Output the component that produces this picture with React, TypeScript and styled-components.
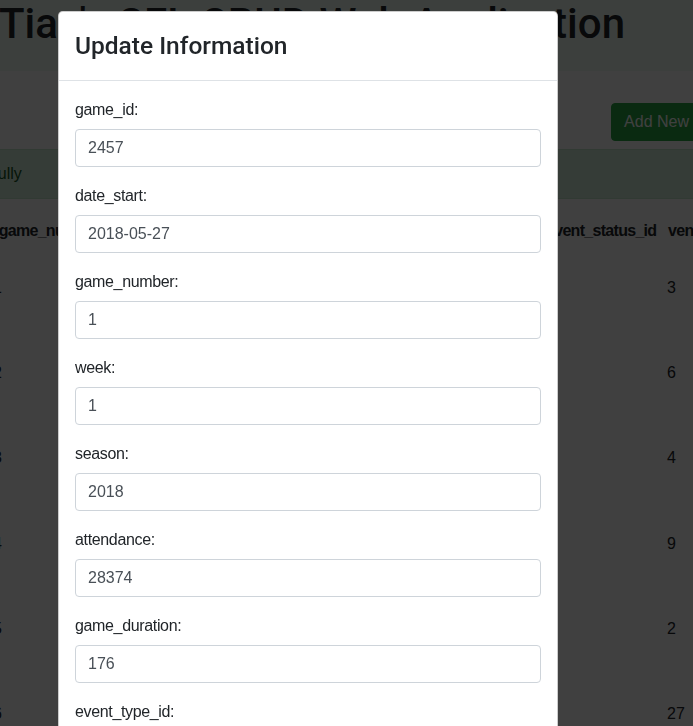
import React from 'react';
import styled, { createGlobalStyle } from 'styled-components';

const GlobalStyle = createGlobalStyle`
  * { box-sizing: border-box; }
  html, body {
    margin: 0;
    padding: 0;
    height: 100%;
    overflow: hidden;
    background: #fff;
  }
  body {
    font-family: "Liberation Sans", Arial, sans-serif;
    font-size: 16px;
    line-height: 1.5;
    color: #212529;
  }
`;

// the page behind the modal is wider than the window and scrolled sideways
const Page = styled.div`
  width: 930px;
  margin-left: -153px;
`;

const Banner = styled.header`
  background: #f0faf4;
  padding: 1px 0 23.8px;
  text-align: center;
`;

const Title = styled.h1`
  margin: 0;
  font-family: Roboto, "Liberation Sans", sans-serif;
  font-weight: 500;
  font-size: 42px;
  line-height: 1.1;
  color: #212529;
  white-space: nowrap;
`;

const Toolbar = styled.div`
  display: flex;
  justify-content: flex-end;
  padding: 32px 27px 8px 0;
`;

const Button = styled.button`
  height: 38px;
  padding: 6px 12px;
  font-family: inherit;
  font-size: 16px;
  line-height: 1.5;
  color: #fff;
  background: #28a745;
  border: 1px solid #28a745;
  border-radius: 4px;
  white-space: nowrap;
`;

const Alert = styled.div`
  padding: 12px 20px;
  background: #d4edda;
  border: 1px solid #c3e6cb;
  color: #155724;
`;

const Table = styled.table`
  table-layout: fixed;
  border-collapse: collapse;
  width: 890px;
`;

const HeadRow = styled.tr`
  height: 63px;
`;

const BodyRow = styled.tr`
  height: 85.2px;
`;

const Th = styled.th`
  padding: 0 6px 19px;
  text-align: center;
  vertical-align: bottom;
  font-weight: 700;
  letter-spacing: -0.7px;
  white-space: nowrap;
  overflow: hidden;
`;

const Td = styled.td`
  padding: 14px 6px 0 5px;
  vertical-align: top;
  white-space: nowrap;
  overflow: hidden;
`;

const Backdrop = styled.div`
  position: fixed;
  inset: 0;
  background: rgba(0, 0, 0, 0.75);
  z-index: 10;
`;

const Modal = styled.div`
  position: fixed;
  top: 11px;
  left: 58px;
  width: 500px;
  background: #fff;
  border: 1px solid rgba(0, 0, 0, 0.2);
  border-radius: 4.8px;
  z-index: 20;
`;

const ModalHeader = styled.div`
  padding: 16px;
  border-bottom: 1px solid #dee2e6;
`;

const ModalTitle = styled.h4`
  margin: 0;
  font-family: Roboto, "Liberation Sans", sans-serif;
  font-weight: 500;
  font-size: 24.5px;
  line-height: 36px;
  color: #212529;
`;

const ModalBody = styled.form`
  padding: 16px;
`;

const FormGroup = styled.div`
  margin-bottom: 16px;
`;

const Label = styled.label`
  display: inline-block;
  margin-bottom: 8px;
  padding-top: 1px;
  height: 24px;
  letter-spacing: -0.35px;
  color: #212529;
`;

const Input = styled.input`
  display: block;
  width: 100%;
  height: 38px;
  padding: 6px 12px;
  font-family: inherit;
  font-size: 16px;
  line-height: 1.5;
  color: #495057;
  background: #fff;
  border: 1px solid #ced4da;
  border-radius: 4px;
`;

const columns = [
  { key: 'game_id', width: 64 },
  { key: 'date_start', width: 77 },
  { key: 'game_number', width: 123 },
  { key: 'week', width: 60 },
  { key: 'season', width: 70 },
  { key: 'attendance', width: 100 },
  { key: 'game_duration', width: 110 },
  { key: 'event_type_id', width: 89 },
  { key: 'event_status_id', width: 122 },
  { key: 'venue_id', width: 75 },
];

const rows = [
  ['2457', '2018-05-27', '1', '1', '2018', '28374', '176', '1', '4', '3'],
  ['2458', '2018-06-14', '2', '1', '2018', '30124', '181', '1', '4', '6'],
  ['2459', '2018-06-15', '3', '1', '2018', '24817', '174', '1', '4', '4'],
  ['2460', '2018-06-16', '4', '1', '2018', '32107', '190', '1', '4', '9'],
  ['2461', '2018-06-16', '5', '1', '2018', '25406', '169', '1', '4', '2'],
  ['2462', '2018-06-17', '6', '1', '2018', '21893', '183', '1', '4', '27'],
  ['2463', '2018-06-21', '7', '2', '2018', '26511', '178', '1', '4', '5'],
];

const fields: [string, string][] = [
  ['game_id', '2457'],
  ['date_start', '2018-05-27'],
  ['game_number', '1'],
  ['week', '1'],
  ['season', '2018'],
  ['attendance', '28374'],
  ['game_duration', '176'],
  ['event_type_id', '1'],
  ['event_status_id', '4'],
  ['venue_id', '3'],
];

export default function App() {
  return (
    <>
      <GlobalStyle />
      <Page>
        <Banner>
          <Title>Tian's CFL CRUD Web Application</Title>
        </Banner>
        <Toolbar>
          <Button type="button">Add New Game</Button>
        </Toolbar>
        <Alert>Updated Successfully</Alert>
        <Table>
          <colgroup>
            {columns.map((c) => (
              <col key={c.key} style={{ width: c.width }} />
            ))}
          </colgroup>
          <thead>
            <HeadRow>
              {columns.map((c) => (
                <Th key={c.key}>{c.key}</Th>
              ))}
            </HeadRow>
          </thead>
          <tbody>
            {rows.map((r) => (
              <BodyRow key={r[0]}>
                {r.map((v, i) => (
                  <Td key={i}>{v}</Td>
                ))}
              </BodyRow>
            ))}
          </tbody>
        </Table>
      </Page>

      <Backdrop />
      <Modal>
        <ModalHeader>
          <ModalTitle>Update Information</ModalTitle>
        </ModalHeader>
        <ModalBody>
          {fields.map(([name, value]) => (
            <FormGroup key={name}>
              <Label htmlFor={name}>{name}:</Label>
              <Input id={name} defaultValue={value} />
            </FormGroup>
          ))}
        </ModalBody>
      </Modal>
    </>
  );
}
